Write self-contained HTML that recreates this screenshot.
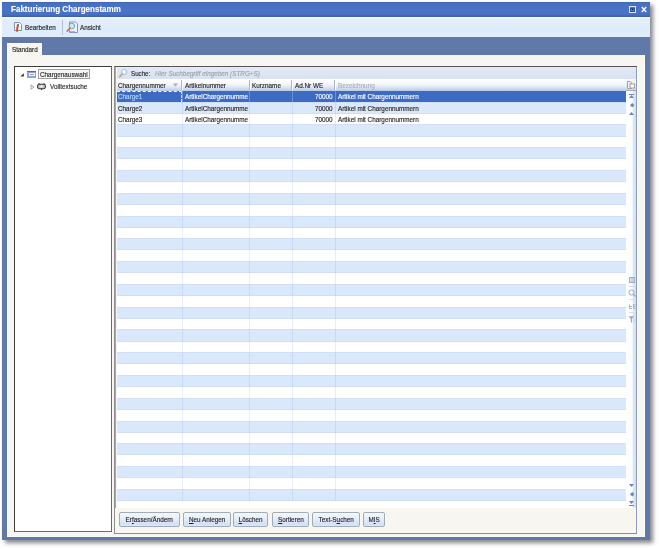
<!DOCTYPE html><html><head><meta charset="utf-8"><style>
*{margin:0;padding:0;box-sizing:border-box}
html,body{width:659px;height:549px;overflow:hidden;background:#fff;font-family:"Liberation Sans", sans-serif;}
.a{position:absolute}
u{text-decoration:underline;text-underline-offset:1px;text-decoration-thickness:0.8px;}
.t{position:absolute;white-space:nowrap;font-size:7px;line-height:9px;color:#1e1e1e;transform-origin:0 0;-webkit-text-stroke:0.15px currentColor;}
</style></head><body><div class="a" style="left:5px;top:5px;width:648px;height:538px;background:#86868c;filter:blur(2px)"></div>
<div class="a" style="left:2px;top:2px;width:648px;height:538px;background:#6079a8"></div>
<div class="a" style="left:2px;top:2px;width:648px;height:15px;background:linear-gradient(#3f63b2 0px,#4870c2 1.5px,#4b73c6 60%,#4770c0 85%,#3c5ea8 100%)"></div>
<div class="t" style="left:11px;top:3.5px;font-size:9px;line-height:11px;font-weight:bold;color:#fff;transform:scaleX(.893);-webkit-text-stroke:0.1px #fff">Fakturierung Chargenstamm</div>
<div class="a" style="left:628.5px;top:6px;width:7.5px;height:7px;border:1px solid #d8e4f6"></div>
<div class="a" style="left:630px;top:7.5px;width:4.5px;height:4px;border:1px solid #34509a"></div>
<div class="a" style="left:631.6px;top:9px;width:1.3px;height:1.2px;background:#102050"></div>
<svg class="a" style="left:640.5px;top:6px" width="6" height="7" viewBox="0 0 6 7"><path d="M0.8 1L5.2 6M5.2 1L0.8 6" stroke="#f4f7fc" stroke-width="1.5"/></svg>
<div class="a" style="left:2px;top:17px;width:648px;height:20px;background:linear-gradient(#f6f9fd 0px,#f6f9fd 1px,#e2eefc 2px,#ddebfb 90%,#e6f0fb 100%)"></div>
<svg class="a" style="left:14px;top:22px" width="9" height="10" viewBox="0 0 9 10"><path d="M0.5 0.5H5.5L7.5 2.5V8.5H0.5Z" fill="#f3f5f9" stroke="#8790a4"/><path d="M4.2 2.2L3.7 4" stroke="#3a3a3a" stroke-width="1.6"/><path d="M3.7 4L2.9 8.8" stroke="#c4532f" stroke-width="2" stroke-linecap="round"/></svg>
<div class="t" style="left:25px;top:22.5px;font-size:8px;transform:scaleX(.793)">Bearbeiten</div>
<div class="a" style="left:62px;top:20px;width:1px;height:15px;background:#b5c2d6"></div>
<svg class="a" style="left:66px;top:21px" width="13" height="12" viewBox="0 0 13 12"><path d="M3.5 1H9.5L11.5 3V11.5H3.5Z" fill="#eef2f8" stroke="#8a94b8"/><circle cx="5.8" cy="5" r="2.8" fill="#c8ecf6" stroke="#7890b0" stroke-width=".9"/><path d="M4 7.2L1.3 10" stroke="#c07850" stroke-width="1.8" stroke-linecap="round"/><path d="M4 10.5H9" stroke="#a8b8d8" stroke-width="1.2"/></svg>
<div class="t" style="left:79.5px;top:22.5px;font-size:8px;transform:scaleX(.793)">Ansicht</div>
<div class="a" style="left:7px;top:43px;width:35px;height:13px;background:#f8f6f0;border-left:1px solid #fdfdfd;border-top:1px solid #fdfdfd"></div>
<div class="t" style="left:12px;top:45px;font-size:8px;transform:scaleX(.793)">Standard</div>
<div class="a" style="left:7px;top:55px;width:638px;height:482px;background:#f8f6f0;border-left:1px solid #fdfdfd"></div>
<div class="a" style="left:7px;top:535.5px;width:638px;height:1.2px;background:#fdfdfd"></div>
<div class="a" style="left:643.8px;top:55px;width:1.2px;height:482px;background:#fdfdfd"></div>
<div class="a" style="left:14px;top:66px;width:98px;height:466px;background:#fff;border:1px solid #6a6a6a;border-top-color:#3c3c3c;border-left-color:#3c3c3c"></div>
<svg class="a" style="left:20px;top:72.5px" width="4" height="4" viewBox="0 0 4 4"><path d="M3.8 0.2V3.5H0.3z" fill="#303030"/></svg>
<div class="a" style="left:27px;top:70.5px;width:9px;height:7px;background:#8ea2de"></div>
<div class="a" style="left:27px;top:70.5px;width:9px;height:1.5px;background:#4a68b8"></div>
<div class="a" style="left:28.5px;top:72.5px;width:6px;height:3.5px;background:#f4f6fc"></div>
<div class="a" style="left:29.5px;top:73.5px;width:4px;height:1px;background:#9aa4c0"></div>
<div class="a" style="left:38px;top:69px;width:52px;height:10px;border:1px solid #a0a0a0;background:#f6f6f6"></div>
<div class="t" style="left:40px;top:69.5px;font-size:8px;transform:scaleX(.793)">Chargenauswahl</div>
<svg class="a" style="left:30px;top:84px" width="5" height="6" viewBox="0 0 5 6"><path d="M1 0.8L4 3L1 5.2z" fill="none" stroke="#909090" stroke-width=".8"/></svg>
<svg class="a" style="left:37px;top:83px" width="9" height="7" viewBox="0 0 9 7"><rect x="0.6" y="1.3" width="7.8" height="4.4" rx="1.6" fill="#c8c8c8" stroke="#3a3a3a" stroke-width="1.1"/><path d="M2 0.2v1.2M7 0.2v1.2M4.5 5.6v1.4" stroke="#3a3a3a" stroke-width="1.2"/><circle cx="4.5" cy="3.5" r="1.2" fill="#f0f0f0"/></svg>
<div class="t" style="left:49.8px;top:82px;font-size:8px;transform:scaleX(.793)">Volltextsuche</div>
<div class="a" style="left:114px;top:66px;width:523px;height:468px;background:#f8f6f0;border:1px solid #8e8e8e;border-top-color:#555;border-right:none"></div>
<div class="a" style="left:115px;top:67px;width:1px;height:440.5px;background:#a4a8b0"></div>
<div class="a" style="left:116px;top:79px;width:1px;height:428.5px;background:#f2f4f8"></div>
<div class="a" style="left:117px;top:91px;width:509px;height:416.5px;background:#fff"></div>
<div class="a" style="left:117px;top:67px;width:519px;height:12px;background:linear-gradient(#e4e9f6,#d9e1f2)"></div>
<svg class="a" style="left:118px;top:68px" width="10" height="10" viewBox="0 0 10 10"><circle cx="6.3" cy="4" r="2.6" fill="#e2f6fc" stroke="#a4b8cc" stroke-width=".9"/><circle cx="5.6" cy="3.3" r="1" fill="#fff"/><path d="M4.3 6L1.8 8.6" stroke="#c4a084" stroke-width="1.7" stroke-linecap="round"/></svg>
<div class="t" style="left:130.5px;top:68.5px;font-size:8px;transform:scaleX(.774)">Suche:</div>
<div class="t" style="left:155.4px;top:68.5px;font-size:8px;font-style:italic;color:#9aa0aa;transform:scaleX(.793)">Hier Suchbegriff eingeben (STRG+S)</div>
<div class="a" style="left:117px;top:79px;width:509px;height:12px;background:linear-gradient(#ffffff 0%,#f6f8fc 40%,#dce5f3 70%,#b9c9e3 100%)"></div>
<div class="a" style="left:626px;top:79px;width:10px;height:12px;background:linear-gradient(#f8fafc,#e2e8f2 60%,#c8d3e6)"></div>
<div class="a" style="left:626px;top:90px;width:10px;height:1px;background:#a4acbc"></div>
<div class="t" style="left:118.0px;top:80.5px;font-size:8px;color:#1e1e1e;transform:scaleX(.793)">Chargennummer</div>
<div class="t" style="left:185.2px;top:80.5px;font-size:8px;color:#1e1e1e;transform:scaleX(.793)">Artikelnummer</div>
<div class="a" style="left:181.0px;top:80px;width:1px;height:10px;background:#aab6c8"></div>
<div class="a" style="left:182.0px;top:80px;width:1px;height:10px;background:#fafcff"></div>
<div class="t" style="left:251.7px;top:80.5px;font-size:8px;color:#1e1e1e;transform:scaleX(.793)">Kurzname</div>
<div class="a" style="left:248.5px;top:80px;width:1px;height:10px;background:#aab6c8"></div>
<div class="a" style="left:249.5px;top:80px;width:1px;height:10px;background:#fafcff"></div>
<div class="t" style="left:295.3px;top:80.5px;font-size:8px;color:#1e1e1e;transform:scaleX(.793)">Ad.Nr WE</div>
<div class="a" style="left:291.2px;top:80px;width:1px;height:10px;background:#aab6c8"></div>
<div class="a" style="left:292.2px;top:80px;width:1px;height:10px;background:#fafcff"></div>
<div class="t" style="left:338.3px;top:80.5px;font-size:8px;color:#a8aeb8;transform:scaleX(.793)">Bezeichnung</div>
<div class="a" style="left:334.2px;top:80px;width:1px;height:10px;background:#aab6c8"></div>
<div class="a" style="left:335.2px;top:80px;width:1px;height:10px;background:#fafcff"></div>
<svg class="a" style="left:173px;top:83px" width="5" height="4" viewBox="0 0 5 4"><path d="M0 0.5H5L2.5 3.5z" fill="#a4acb8"/></svg>
<svg class="a" style="left:627px;top:81px" width="8" height="8" viewBox="0 0 8 8"><path d="M0.5 0.5H3.5L4.5 1.5V7.5H0.5Z" fill="#eeeeee" stroke="#9a9a9a" stroke-width=".9"/><rect x="3" y="3" width="4.5" height="4" fill="#fbfbfb" stroke="#9a9a9a" stroke-width=".9"/></svg>
<div class="a" style="left:117px;top:91px;width:509px;height:11px;background:#3d6bc4"></div>
<div class="a" style="left:117px;top:102px;width:509px;height:12px;background:#dae8fc;box-shadow:inset 0 1px rgba(150,165,215,0.12),inset 0 -1px rgba(150,160,225,0.14)"></div>
<div class="a" style="left:117px;top:124px;width:509px;height:13px;background:#dae8fc;box-shadow:inset 0 1px rgba(150,165,215,0.12),inset 0 -1px rgba(150,160,225,0.14)"></div>
<div class="a" style="left:117px;top:147px;width:509px;height:12px;background:#dae8fc;box-shadow:inset 0 1px rgba(150,165,215,0.12),inset 0 -1px rgba(150,160,225,0.14)"></div>
<div class="a" style="left:117px;top:170px;width:509px;height:12px;background:#dae8fc;box-shadow:inset 0 1px rgba(150,165,215,0.12),inset 0 -1px rgba(150,160,225,0.14)"></div>
<div class="a" style="left:117px;top:193px;width:509px;height:12px;background:#dae8fc;box-shadow:inset 0 1px rgba(150,165,215,0.12),inset 0 -1px rgba(150,160,225,0.14)"></div>
<div class="a" style="left:117px;top:216px;width:509px;height:12px;background:#dae8fc;box-shadow:inset 0 1px rgba(150,165,215,0.12),inset 0 -1px rgba(150,160,225,0.14)"></div>
<div class="a" style="left:117px;top:238px;width:509px;height:12px;background:#dae8fc;box-shadow:inset 0 1px rgba(150,165,215,0.12),inset 0 -1px rgba(150,160,225,0.14)"></div>
<div class="a" style="left:117px;top:261px;width:509px;height:12px;background:#dae8fc;box-shadow:inset 0 1px rgba(150,165,215,0.12),inset 0 -1px rgba(150,160,225,0.14)"></div>
<div class="a" style="left:117px;top:284px;width:509px;height:12px;background:#dae8fc;box-shadow:inset 0 1px rgba(150,165,215,0.12),inset 0 -1px rgba(150,160,225,0.14)"></div>
<div class="a" style="left:117px;top:307px;width:509px;height:12px;background:#dae8fc;box-shadow:inset 0 1px rgba(150,165,215,0.12),inset 0 -1px rgba(150,160,225,0.14)"></div>
<div class="a" style="left:117px;top:329px;width:509px;height:13px;background:#dae8fc;box-shadow:inset 0 1px rgba(150,165,215,0.12),inset 0 -1px rgba(150,160,225,0.14)"></div>
<div class="a" style="left:117px;top:352px;width:509px;height:12px;background:#dae8fc;box-shadow:inset 0 1px rgba(150,165,215,0.12),inset 0 -1px rgba(150,160,225,0.14)"></div>
<div class="a" style="left:117px;top:375px;width:509px;height:12px;background:#dae8fc;box-shadow:inset 0 1px rgba(150,165,215,0.12),inset 0 -1px rgba(150,160,225,0.14)"></div>
<div class="a" style="left:117px;top:398px;width:509px;height:12px;background:#dae8fc;box-shadow:inset 0 1px rgba(150,165,215,0.12),inset 0 -1px rgba(150,160,225,0.14)"></div>
<div class="a" style="left:117px;top:421px;width:509px;height:12px;background:#dae8fc;box-shadow:inset 0 1px rgba(150,165,215,0.12),inset 0 -1px rgba(150,160,225,0.14)"></div>
<div class="a" style="left:117px;top:443px;width:509px;height:12px;background:#dae8fc;box-shadow:inset 0 1px rgba(150,165,215,0.12),inset 0 -1px rgba(150,160,225,0.14)"></div>
<div class="a" style="left:117px;top:466px;width:509px;height:12px;background:#dae8fc;box-shadow:inset 0 1px rgba(150,165,215,0.12),inset 0 -1px rgba(150,160,225,0.14)"></div>
<div class="a" style="left:117px;top:489px;width:509px;height:12px;background:#dae8fc;box-shadow:inset 0 1px rgba(150,165,215,0.12),inset 0 -1px rgba(150,160,225,0.14)"></div>
<div class="a" style="left:181.5px;top:102.39px;width:1px;height:398.7px;background:rgba(140,160,225,0.2)"></div>
<div class="a" style="left:181.5px;top:91.00px;width:1px;height:11.39px;background:rgba(255,255,255,0.25)"></div>
<div class="a" style="left:249.0px;top:102.39px;width:1px;height:398.7px;background:rgba(140,160,225,0.2)"></div>
<div class="a" style="left:249.0px;top:91.00px;width:1px;height:11.39px;background:rgba(255,255,255,0.25)"></div>
<div class="a" style="left:291.7px;top:102.39px;width:1px;height:398.7px;background:rgba(140,160,225,0.2)"></div>
<div class="a" style="left:291.7px;top:91.00px;width:1px;height:11.39px;background:rgba(255,255,255,0.25)"></div>
<div class="a" style="left:334.7px;top:102.39px;width:1px;height:398.7px;background:rgba(140,160,225,0.2)"></div>
<div class="a" style="left:334.7px;top:91.00px;width:1px;height:11.39px;background:rgba(255,255,255,0.25)"></div>
<div class="a" style="left:117px;top:91px;width:64.5px;height:11px;border-top:1px dashed #fff;border-right:1px dashed rgba(255,255,255,.8)"></div>
<div class="t" style="left:118px;top:92.20px;font-size:8px;color:#b4dcff;transform:scaleX(.793)">Charge1</div>
<div class="t" style="left:184.5px;top:92.20px;font-size:8px;color:#ffffff;transform:scaleX(.793)">ArtikelChargennumme</div>
<div class="t" style="left:314.5px;top:92.20px;font-size:8px;color:#ffffff;transform:scaleX(.793)">70000</div>
<div class="t" style="left:338.3px;top:92.20px;font-size:8px;color:#ffffff;transform:scaleX(.793)">Artikel mit Chargennummern</div>
<div class="t" style="left:118px;top:103.59px;font-size:8px;color:#1e1e1e;transform:scaleX(.793)">Charge2</div>
<div class="t" style="left:184.5px;top:103.59px;font-size:8px;color:#1e1e1e;transform:scaleX(.793)">ArtikelChargennumme</div>
<div class="t" style="left:314.5px;top:103.59px;font-size:8px;color:#1e1e1e;transform:scaleX(.793)">70000</div>
<div class="t" style="left:338.3px;top:103.59px;font-size:8px;color:#1e1e1e;transform:scaleX(.793)">Artikel mit Chargennummern</div>
<div class="t" style="left:118px;top:114.98px;font-size:8px;color:#1e1e1e;transform:scaleX(.793)">Charge3</div>
<div class="t" style="left:184.5px;top:114.98px;font-size:8px;color:#1e1e1e;transform:scaleX(.793)">ArtikelChargennumme</div>
<div class="t" style="left:314.5px;top:114.98px;font-size:8px;color:#1e1e1e;transform:scaleX(.793)">70000</div>
<div class="t" style="left:338.3px;top:114.98px;font-size:8px;color:#1e1e1e;transform:scaleX(.793)">Artikel mit Chargennummern</div>
<div class="a" style="left:626px;top:91px;width:10px;height:416.5px;background:linear-gradient(90deg,#fdfeff 0%,#fcfdff 60%,#dde7f6 75%,#d2def3 100%)"></div>
<div class="a" style="left:637px;top:67px;width:1px;height:466px;background:#fbfcfd"></div>
<div class="a" style="left:636px;top:67px;width:1px;height:466px;background:#8d9cb9"></div>
<div class="a" style="left:629px;top:93.5px;width:5px;height:1px;background:#6d84b8"></div>
<svg class="a" style="left:629px;top:95px" width="5" height="3" viewBox="0 0 5 3"><path d="M0 3L2.5 0L5 3z" fill="#6d84b8"/></svg>
<svg class="a" style="left:629.5px;top:102.5px" width="4.5" height="4.5" viewBox="0 0 4.5 4.5"><path d="M2.25 0L4.5 2.25L2.25 4.5L0 2.25z" fill="#6d84b8"/></svg>
<svg class="a" style="left:629px;top:112px" width="5" height="3" viewBox="0 0 5 3"><path d="M0 3L2.5 0L5 3z" fill="#6d84b8"/></svg>
<svg class="a" style="left:629px;top:484px" width="5" height="3" viewBox="0 0 5 3"><path d="M0 0L2.5 3L5 0z" fill="#6d84b8"/></svg>
<svg class="a" style="left:629.5px;top:492.3px" width="4.5" height="4.5" viewBox="0 0 4.5 4.5"><path d="M2.25 0L4.5 2.25L2.25 4.5L0 2.25z" fill="#6d84b8"/></svg>
<svg class="a" style="left:629px;top:501px" width="5" height="3" viewBox="0 0 5 3"><path d="M0 0L2.5 3L5 0z" fill="#6d84b8"/></svg>
<div class="a" style="left:629px;top:505px;width:5px;height:1px;background:#6d84b8"></div>
<svg class="a" style="left:628.5px;top:276.5px" width="6" height="6" viewBox="0 0 6 6"><rect x="0.5" y="0.5" width="5" height="5" fill="none" stroke="#9eaac4"/><path d="M2.2 0.5v5M3.8 .5v5" stroke="#9eaac4" stroke-width=".8"/></svg>
<div class="a" style="left:629px;top:286px;width:6px;height:1px;background:#d4dbe8"></div>
<svg class="a" style="left:628px;top:289px" width="8" height="8" viewBox="0 0 8 8"><circle cx="3.5" cy="3.5" r="2.6" fill="none" stroke="#9eaac4"/><path d="M5.3 5.3L7.5 7.5" stroke="#9eaac4" stroke-width="1.3"/></svg>
<div class="a" style="left:629px;top:299px;width:6px;height:1px;background:#d4dbe8"></div>
<svg class="a" style="left:628.5px;top:303.5px" width="7" height="5" viewBox="0 0 7 5"><path d="M0.5 0.5v4h2.5M1 2.5h2M4.5 0.5v4M4.5 0.5h2M4.5 2.5h2M4.5 4.5h2" fill="none" stroke="#9eaac4" stroke-width=".9"/></svg>
<div class="a" style="left:629px;top:312px;width:6px;height:1px;background:#d4dbe8"></div>
<svg class="a" style="left:628px;top:316px" width="8" height="7" viewBox="0 0 8 7"><path d="M0.3 0.3H6.2L4 3V6.5H2.8V3z" fill="#9eaac4"/><path d="M5 4h2.5M5 5.5h2.5" stroke="#c4cde0" stroke-width=".8"/></svg>
<div class="a" style="left:119.3px;top:512px;width:60.5px;height:14.5px;border:1px solid #a2abb8;border-radius:2px;background:linear-gradient(#f4f8fd 0%,#e6eefa 45%,#d2e0f6 85%,#dde8fa 100%)"></div>
<div class="t" style="left:119.3px;top:515px;width:76.3px;text-align:center;font-size:8px;transform:scaleX(.793)">Er<u>f</u>assen/Ändern</div>
<div class="a" style="left:182.5px;top:512px;width:48.3px;height:14.5px;border:1px solid #a2abb8;border-radius:2px;background:linear-gradient(#f4f8fd 0%,#e6eefa 45%,#d2e0f6 85%,#dde8fa 100%)"></div>
<div class="t" style="left:182.5px;top:515px;width:60.9px;text-align:center;font-size:8px;transform:scaleX(.793)"><u>N</u>eu Anlegen</div>
<div class="a" style="left:233.3px;top:512px;width:35.2px;height:14.5px;border:1px solid #a2abb8;border-radius:2px;background:linear-gradient(#f4f8fd 0%,#e6eefa 45%,#d2e0f6 85%,#dde8fa 100%)"></div>
<div class="t" style="left:233.3px;top:515px;width:44.4px;text-align:center;font-size:8px;transform:scaleX(.793)"><u>L</u>öschen</div>
<div class="a" style="left:271.5px;top:512px;width:37.9px;height:14.5px;border:1px solid #a2abb8;border-radius:2px;background:linear-gradient(#f4f8fd 0%,#e6eefa 45%,#d2e0f6 85%,#dde8fa 100%)"></div>
<div class="t" style="left:271.5px;top:515px;width:47.8px;text-align:center;font-size:8px;transform:scaleX(.793)"><u>S</u>ortieren</div>
<div class="a" style="left:311.9px;top:512px;width:48.5px;height:14.5px;border:1px solid #a2abb8;border-radius:2px;background:linear-gradient(#f4f8fd 0%,#e6eefa 45%,#d2e0f6 85%,#dde8fa 100%)"></div>
<div class="t" style="left:311.9px;top:515px;width:61.2px;text-align:center;font-size:8px;transform:scaleX(.793)">Text-S<u>u</u>chen</div>
<div class="a" style="left:363.1px;top:512px;width:22.2px;height:14.5px;border:1px solid #a2abb8;border-radius:2px;background:linear-gradient(#f4f8fd 0%,#e6eefa 45%,#d2e0f6 85%,#dde8fa 100%)"></div>
<div class="t" style="left:363.1px;top:515px;width:28.0px;text-align:center;font-size:8px;transform:scaleX(.793)">M<u>I</u>S</div></body></html>
